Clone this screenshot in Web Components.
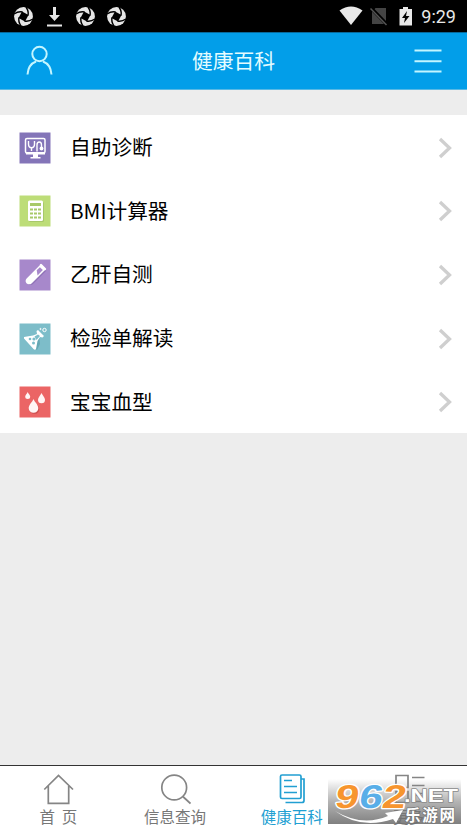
<!DOCTYPE html>
<html lang="zh-CN">
<head>
<meta charset="utf-8">
<title>健康百科</title>
<style>
html,body{margin:0;height:100%}
body{font-family:"Noto Sans CJK SC",sans-serif;background:#ededed;overflow:hidden}
</style>
</head>
<body>
<health-app></health-app>
<script>
const define = (name, html) => customElements.define(name, class extends HTMLElement {
  constructor() {
    super();
    const t = document.createElement('template');
    t.innerHTML = html;
    this.attachShadow({mode: 'open'}).append(t.content.cloneNode(true));
  }
});

const cut = 'M-1-4.500Q-5-5.500-9.500-2.500';
const swirl = `<svg width="21" height="21" viewBox="-10.5 -10.5 21 21"><circle r="9.400" fill="#e6e6e6"/><path d="M-1.500-5L5-1.500 1.500 5-5 1.500Z" fill="#000"/><g fill="none" stroke="#000" stroke-width="1.500"><path d="${cut}"/><path d="${cut}" transform="rotate(90)"/><path d="${cut}" transform="rotate(180)"/><path d="${cut}" transform="rotate(270)"/></g></svg>`;

define('status-bar', `
<style>
:host{display:flex;height:32px;background:#000;align-items:center;justify-content:space-between;padding:0 11px 0 13px;box-sizing:border-box}
div{display:flex;align-items:center}
.l{gap:10px}
svg{display:block}
.t{font:18px/32px Roboto,sans-serif;color:#e8e8e8;margin-left:8px;padding-top:1px}
</style>
<div class="l">${swirl}
<svg width="21" height="21" viewBox="0 0 21 21"><path d="M9 1h3v8h4l-5.500 6L5 9h4zM3 18.500h15v2H3z" fill="#e6e6e6"/></svg>${swirl}${swirl}</div>
<div>
<svg width="24" height="20" viewBox="0 0 24 20"><path d="M.5 4.500Q12-3.500 23.500 4.500L12 19z" fill="#e8e8e8"/></svg>
<svg width="18" height="20" viewBox="0 0 18 20" style="margin-left:7px"><path d="M5.500 2H16v16H2V6z" fill="#444"/><path d="M.5 1.500L17 18.500" stroke="#000" stroke-width="3.500"/><path d="M.5 2.500L16.500 19" stroke="#555" stroke-width="1.500"/></svg>
<svg width="14" height="20" viewBox="0 0 14 20" style="margin-left:11px"><path d="M4 1h5v2h4v16.500H.5V3H4z" fill="#e8e8e8"/><path d="M8 5L3 12h3l-1 5 5.500-7H7z" fill="#000"/></svg>
<span class="t">9:29</span></div>`);

define('title-bar', `
<style>
:host{display:grid;grid-template-columns:78px 1fr 78px;height:58px;background:#029ee9;box-sizing:border-box;border-top:1px solid #07699b;border-bottom:1px solid #58b9e5;align-items:center;justify-items:center;color:#e4fcff;font-size:20.8px;line-height:30px}
svg{display:block;fill:none;stroke:#c3f5ff;stroke-width:2}
span{margin-top:-3px}
</style>
<svg width="28" height="32" viewBox="0 0 28 32"><circle cx="14.500" cy="9" r="7.200"/><path d="M2.500 29.500C3 22 7 18 11 16.500M26.500 29.500C26 22 22 18 18 16.500"/></svg>
<span><slot></slot></span>
<svg width="28" height="26" viewBox="0 0 28 26"><path d="M.5 2.500h27M.5 13.200h27M.5 23.500h27"/></svg>`);

define('menu-row', `
<style>
:host{display:flex;align-items:center;height:63.6px;padding:0 15.5px 0 19px;box-sizing:border-box;color:#000;font-size:20.7px;line-height:30px}
.i{width:32px;height:32px;margin-right:19px;margin-top:2px}
.t{flex:1;white-space:nowrap;margin-top:-1px}
.c{width:14px;height:22px;margin-top:2px}
</style>
<span class="i"><slot name="icon"></slot></span><span class="t"><slot></slot></span>
<svg class="c" viewBox="0 0 14 22"><path d="M2 2L11.500 11 2 20" fill="none" stroke="#cfcfcf" stroke-width="3.300"/></svg>`);

define('menu-list', `<style>:host{display:block;background:#fff;height:318px;margin-top:25px}</style><slot></slot>`);

define('tab-item', `
<style>
:host{display:flex;flex-direction:column;align-items:center;color:#777;font-size:15.5px;line-height:20px;white-space:pre}
.s{height:32px;margin-top:6.500px;margin-bottom:1px}
</style><span class="s"><slot name="icon"></slot></span><span><slot></slot></span>`);

define('tab-bar', `<style>:host{display:grid;grid-template-columns:repeat(4,1fr);height:65px;background:#fff;border-top:1.500px solid #333;box-sizing:border-box}</style><slot></slot>`);

define('site-mark', `
<style>
:host{position:absolute;left:328px;top:779px;width:133px;height:45px;background:linear-gradient(rgba(145,145,145,0),rgba(130,130,130,.6) 50%,rgba(110,110,110,.88))}
svg{display:block}
text{paint-order:stroke;stroke-linejoin:round}
</style>
<svg width="133" height="45" viewBox="0 0 133 45">
<g font-family="Liberation Sans,sans-serif" font-weight="bold" font-size="33" stroke="#fff" stroke-width="2.500" transform="translate(5 0) skewX(-10)">
<text x="6" y="29" fill="#f7952e" textLength="23.500" lengthAdjust="spacingAndGlyphs">9</text>
<text x="30" y="29" fill="#58aee8" textLength="23.500" lengthAdjust="spacingAndGlyphs">6</text>
<text x="53" y="29" fill="#f7952e" textLength="23.500" lengthAdjust="spacingAndGlyphs">2</text></g>
<path d="M7 32Q34 48 60 37L57 34 75 31 68 44 65 40Q33 51 7 32Z" fill="#fff"/>
<text x="76" y="23" font-family="Liberation Sans,sans-serif" font-weight="bold" font-size="19" fill="#fff" stroke="#8b8b8b" stroke-width="1.500" textLength="54" lengthAdjust="spacingAndGlyphs">.NET</text>
<text x="77" y="41.500" font-family="Noto Sans CJK SC,sans-serif" font-weight="bold" font-size="15.500" fill="#fff" stroke="#777" stroke-width="1.500" textLength="50">乐游网</text>
</svg>`);

define('health-app', `
<style>
:host{display:flex;flex-direction:column;height:830px;background:#ededed}
tab-bar{margin-top:auto}
svg{display:block}
</style>
<status-bar></status-bar>
<title-bar>健康百科</title-bar>
<menu-list>
<menu-row><svg slot="icon" width="32" height="32" viewBox="0 0 32 32"><path d="M.5.5h31v31H.5z" fill="#8475b8"/><rect x="6.500" y="6.500" width="19.500" height="14.500" rx="1.500" fill="none" stroke="#fff" stroke-width="1.500"/><path d="M7 20h19v2.500H7zM14 22h5v3h2.500v1.500h-10V25H14z" fill="#fff"/><path d="M9.500 9v3c0 5 6 5 6 0V9M12.500 15.500v3.500M18 19.500V13c0-4 4.500-4 4.500 0v3" fill="none" stroke="#fff" stroke-width="1.400"/><circle cx="22.500" cy="16.500" r="1.900" fill="#fff"/></svg>自助诊断</menu-row>
<menu-row><svg slot="icon" width="32" height="32" viewBox="0 0 32 32"><path d="M.5.5h31v31H.5z" fill="#bddd78"/><rect x="10" y="7" width="15" height="20" rx="1.500" fill="#94b45b" opacity=".5"/><rect x="9" y="5.500" width="15" height="20.500" rx="1.500" fill="#fff"/><path d="M11 8h11v3H11z" fill="#a8c968"/><path d="M11 14.500h11M11 18.500h11M11 22.500h11" stroke="#a8c968" stroke-width="2.200" stroke-dasharray="3 1"/></svg>BMI计算器</menu-row>
<menu-row><svg slot="icon" width="32" height="32" viewBox="0 0 32 32"><path d="M.5.5h31v31H.5z" fill="#a788cb"/><g transform="rotate(45 16 16)"><path d="M13 5h7v18c0 6-7 6-7 0z" transform="translate(1 0)" fill="#71559a" opacity=".4"/><path d="M12.500 5h7v19c0 5-7 5-7 0z" fill="#fff"/><path d="M13.900 7h4.200v7.500l-4.200-3z" fill="#a788cb"/><rect x="12" y="3.500" width="8" height="2.500" rx="1.200" fill="#fff"/></g></svg>乙肝自测</menu-row>
<menu-row><svg slot="icon" width="32" height="32" viewBox="0 0 32 32"><path d="M.5.5h31v31H.5z" fill="#7dbdc9"/><path d="M9 19l9 8 3-6-1-8z" fill="#4c929e" opacity=".5"/><path d="M5 14L14 12.500 18 11l-.5-3L19 7l6 6-1.500 1.500-2.500-.5-2.500 4-1.500 8q-1 1.500-2.500 0L5 15.500z" fill="#fff"/><path d="M15.500 13.500l3.500-2 2 1.500-3.500 4z" fill="#7dbdc9"/><g fill="#7dbdc9"><circle cx="11" cy="16" r="1.300"/><circle cx="15" cy="16" r="1.600"/><circle cx="14.500" cy="20" r="1.500"/></g><g fill="none" stroke="#fff"><circle cx="25.500" cy="7" r="1.700"/><circle cx="21.500" cy="6" r=".6"/></g></svg>检验单解读</menu-row>
<menu-row><svg slot="icon" width="32" height="32" viewBox="0 0 32 32"><path d="M.5.5h31v31H.5z" fill="#eb6565"/><path d="M14.500 13.500c1 3 4.800 5.500 4.800 9a4.800 4.500 0 0 1-9.600 0c0-3.500 3.800-6 4.800-9z" fill="#b64242" transform="translate(1 1)" opacity=".5"/><g fill="#fff6f5"><path d="M14.500 13c1 3 4.800 5.500 4.800 9.300a4.800 4.500 0 0 1-9.600 0c0-3.800 3.800-6.300 4.800-9.300z"/><path d="M22.500 7c.7 2.200 3.500 4.200 3.500 6.700a3.500 3.500 0 0 1-7 0c0-2.500 2.800-4.500 3.500-6.700z"/><path d="M8.700 6c.5 1.500 2.500 3 2.500 4.500a2.500 2.500 0 0 1-5 0c0-1.500 2-3 2.500-4.500z"/></g></svg>宝宝血型</menu-row>
</menu-list>
<tab-bar>
<tab-item><svg slot="icon" width="32" height="32" viewBox="0 0 32 32" fill="none" stroke="#858585" stroke-width="1.700"><path d="M2.300 16.500L16.500 2.500 31 16.500M6.300 13v17.300h20.400V13"/></svg>首  页</tab-item>
<tab-item><svg slot="icon" width="32" height="32" viewBox="0 0 32 32" fill="none" stroke="#858585" stroke-width="1.700"><circle cx="15.200" cy="14.500" r="12.400"/><path d="M23.800 23.500L31.500 30.500"/></svg>信息查询</tab-item>
<tab-item style="color:#229fd2"><svg slot="icon" width="32" height="32" viewBox="0 0 32 32" fill="none" stroke="#229fd2" stroke-width="1.700"><path d="M6 2h17.500q1.500 0 1.500 1.500v20.500q0 1.500-1.500 1.500h-17.500q-1.500 0-1.500-1.500V3.500Q4.500 2 6 2zM25 6h3v21.500q0 2-2 2H9.500M8 7.500h8M8 13.500h13M8 19.500h13"/></svg>健康百科</tab-item>
<tab-item><svg slot="icon" width="32" height="32" viewBox="0 0 32 32" fill="none" stroke="#858585" stroke-width="1.700"><path d="M3 2.500h12v12H3zM19 4.500h12.500M19 12.500h12.500M3 18.500h12v11H3zM19 20.500h12.500M19 28.500h12.500"/></svg>更多</tab-item>
</tab-bar>
<site-mark></site-mark>`);
</script>
</body>
</html>
